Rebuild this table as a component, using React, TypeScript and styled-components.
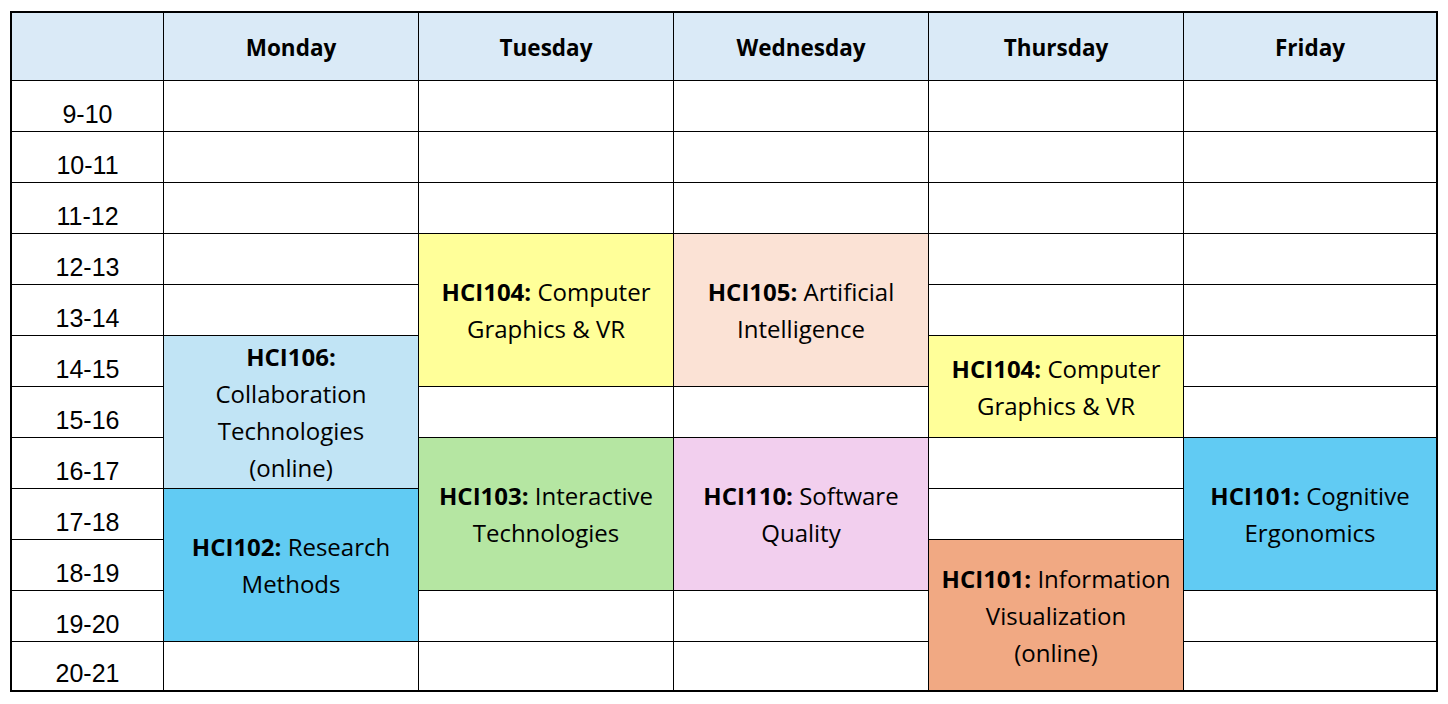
import React from "react";
import styled, { createGlobalStyle } from "styled-components";

const GlobalStyle = createGlobalStyle`
  html, body { margin: 0; padding: 0; background: #ffffff; }
  body { font-family: "Open Sans", "Noto Sans", sans-serif; color: #000; }
`;

const Page = styled.div`
  padding: 11px 0 0 10px;
`;

const Table = styled.div`
  display: grid;
  grid-template-columns: 151px 254px 254px 254px 254px 252px;
  grid-template-rows: 67px repeat(11, 50px) 48px;
  gap: 1px;
  background: #000;
  border: 2px solid #000;
  width: max-content;
`;

const HeaderCell = styled.div<{ $col: number }>`
  grid-column: ${(p) => p.$col};
  grid-row: 1;
  background: #daeaf7;
  display: flex;
  align-items: center;
  justify-content: center;
  padding-top: 2px;
  box-sizing: border-box;
  font-family: "Open Sans", sans-serif;
  font-weight: 700;
  font-size: 22.5px;
`;

const TimeCell = styled.div<{ $row: number }>`
  grid-column: 1;
  grid-row: ${(p) => p.$row};
  background: #fff;
  display: flex;
  align-items: flex-end;
  justify-content: center;
  padding-bottom: 2px;
  box-sizing: border-box;
  font-family: "Liberation Sans", Arial, sans-serif;
  font-size: 25px;
`;

const EmptyCell = styled.div<{ $row: number; $col: number }>`
  grid-column: ${(p) => p.$col};
  grid-row: ${(p) => p.$row};
  background: #fff;
`;

const CourseCell = styled.div<{ $row: number; $col: number; $span: number; $bg: string }>`
  grid-column: ${(p) => p.$col};
  grid-row: ${(p) => p.$row} / span ${(p) => p.$span};
  background: ${(p) => p.$bg};
  display: flex;
  flex-direction: column;
  align-items: center;
  justify-content: center;
  text-align: center;
  font-family: "Open Sans", sans-serif;
  font-size: 24px;
  line-height: 37px;
`;

const Line = styled.div`
  white-space: nowrap;
`;

const Code = styled.b`
  font-weight: 700;
`;

const days = ["Monday", "Tuesday", "Wednesday", "Thursday", "Friday"];
const times = ["9-10", "10-11", "11-12", "12-13", "13-14", "14-15", "15-16", "16-17", "17-18", "18-19", "19-20", "20-21"];

type Course = {
  day: number;
  start: number;
  span: number;
  bg: string;
  code: string;
  lines: string[];
  codeAlone?: boolean;
};

const courses: Course[] = [
  { day: 0, start: 5, span: 3, bg: "#c1e4f5", code: "HCI106:", codeAlone: true, lines: ["Collaboration", "Technologies", "(online)"] },
  { day: 0, start: 8, span: 3, bg: "#61cbf3", code: "HCI102:", lines: ["Research", "Methods"] },
  { day: 1, start: 3, span: 3, bg: "#ffff99", code: "HCI104:", lines: ["Computer", "Graphics & VR"] },
  { day: 1, start: 7, span: 3, bg: "#b5e6a2", code: "HCI103:", lines: ["Interactive", "Technologies"] },
  { day: 2, start: 3, span: 3, bg: "#fbe2d5", code: "HCI105:", lines: ["Artificial", "Intelligence"] },
  { day: 2, start: 7, span: 3, bg: "#f2cfee", code: "HCI110:", lines: ["Software", "Quality"] },
  { day: 3, start: 5, span: 2, bg: "#ffff99", code: "HCI104:", lines: ["Computer", "Graphics & VR"] },
  { day: 3, start: 9, span: 3, bg: "#f1a983", code: "HCI101:", lines: ["Information", "Visualization", "(online)"] },
  { day: 4, start: 7, span: 3, bg: "#61cbf3", code: "HCI101:", lines: ["Cognitive", "Ergonomics"] },
];

const isCovered = (day: number, slot: number) =>
  courses.some((c) => c.day === day && slot >= c.start && slot < c.start + c.span);

export default function App() {
  const cells: React.ReactNode[] = [];
  times.forEach((t, slot) => {
    cells.push(
      <TimeCell key={`t${slot}`} $row={slot + 2}>
        {t}
      </TimeCell>
    );
    days.forEach((_, day) => {
      if (!isCovered(day, slot)) {
        cells.push(<EmptyCell key={`e${slot}-${day}`} $row={slot + 2} $col={day + 2} />);
      }
    });
  });

  return (
    <>
      <GlobalStyle />
      <Page>
        <Table>
          <HeaderCell $col={1} />
          {days.map((d, i) => (
            <HeaderCell key={d} $col={i + 2}>
              {d}
            </HeaderCell>
          ))}
          {cells}
          {courses.map((c, i) => (
            <CourseCell key={`c${i}`} $row={c.start + 2} $col={c.day + 2} $span={c.span} $bg={c.bg}>
              {c.codeAlone ? (
                <>
                  <Line>
                    <Code>{c.code}</Code>
                  </Line>
                  {c.lines.map((l) => (
                    <Line key={l}>{l}</Line>
                  ))}
                </>
              ) : (
                <>
                  <Line>
                    <Code>{c.code}</Code> {c.lines[0]}
                  </Line>
                  {c.lines.slice(1).map((l) => (
                    <Line key={l}>{l}</Line>
                  ))}
                </>
              )}
            </CourseCell>
          ))}
        </Table>
      </Page>
    </>
  );
}
